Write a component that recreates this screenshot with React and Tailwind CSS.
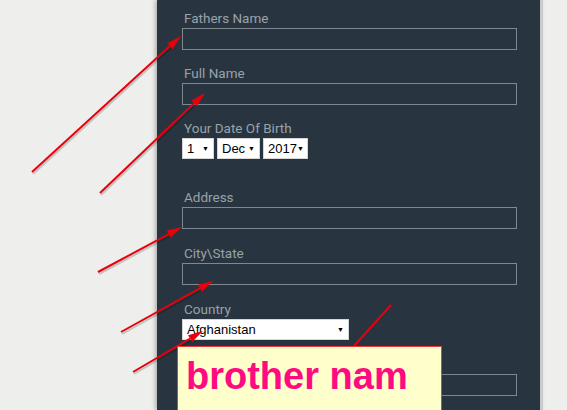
const labelCls = "block h-4 leading-4 text-[13.5px] text-[#98a2a8] mb-[2px] pl-[2px]";
const inputCls = "block w-[335px] h-[22px] border border-[#7d898f] bg-transparent";

function Field({ label, className = "" }) {
  return (
    <div className={className}>
      <label className={labelCls}>{label}</label>
      <div className={inputCls} />
    </div>
  );
}

function FakeSelect({ value, width }) {
  return (
    <div
      className={`flex items-center justify-between h-[21px] bg-white border border-[#d6d6d6] pl-[4px] pr-[4px] text-[13px] text-black ${width}`}
      style={{ fontFamily: '"Liberation Sans", Arial, sans-serif' }}
    >
      <span>{value}</span>
      <span className="text-[7px] leading-none">▼</span>
    </div>
  );
}

const arrows = [
  { x1: 32, y1: 172, x2: 181, y2: 36 },
  { x1: 100, y1: 193, x2: 205, y2: 93 },
  { x1: 98, y1: 272, x2: 182, y2: 227 },
  { x1: 121, y1: 332, x2: 213, y2: 281 },
  { x1: 133, y1: 372, x2: 203, y2: 331 },
];

function Arrow({ x1, y1, x2, y2 }) {
  const dx = x2 - x1;
  const dy = y2 - y1;
  const len = Math.hypot(dx, dy);
  const ux = dx / len;
  const uy = dy / len;
  const bx = x2 - ux * 15;
  const by = y2 - uy * 15;
  const px = -uy * 4;
  const py = ux * 4;
  const head = `${x2},${y2} ${bx + px},${by + py} ${bx - px},${by - py}`;
  return (
    <g>
      <line x1={x1 + 1} y1={y1 + 2} x2={bx + 1} y2={by + 2} stroke="rgba(0,0,0,0.18)" strokeWidth="2" />
      <line x1={x1} y1={y1} x2={bx} y2={by} stroke="#e8000b" strokeWidth="2" />
      <polygon points={head} fill="#e8000b" />
    </g>
  );
}

export default function App() {
  return (
    <div
      className="relative w-[567px] h-[410px] overflow-hidden bg-[#eeeeec]"
      style={{ fontFamily: "Roboto, 'Noto Sans', sans-serif" }}
    >
      <div className="ml-[157px] w-[386px] h-[410px] bg-[#283540] pl-[25px] pt-[10px] border-r-[3px] border-[#c9cbcb] shadow-[-2px_0_4px_rgba(0,0,0,0.25)]">
        <Field label="Fathers Name" />
        <Field label="Full Name" className="mt-[15px]" />

        <div className="mt-[15px]">
          <label className={labelCls}>Your Date Of Birth</label>
          <div className="flex gap-[3px]">
            <FakeSelect value="1" width="w-[32px]" />
            <FakeSelect value="Dec" width="w-[43px]" />
            <FakeSelect value="2017" width="w-[45px]" />
          </div>
        </div>

        <Field label="Address" className="mt-[30px]" />
        <Field label="City\State" className="mt-[16px]" />

        <div className="mt-[16px]">
          <label className={labelCls}>Country</label>
          <FakeSelect value="Afghanistan" width="w-[167px]" />
        </div>

        {/* label of this field is hidden under the note */}
        <Field label="" className="mt-[16px]" />
      </div>

      <svg className="absolute left-0 top-0" width="567" height="410">
        <line x1="391" y1="305" x2="354" y2="346" stroke="#e8000b" strokeWidth="2" />
        {arrows.map((a, i) => (
          <Arrow key={i} {...a} />
        ))}
      </svg>

      <div className="absolute left-[177px] top-[346px] w-[265px] h-[80px] bg-[#ffffcc] border border-[#f03a3a] pl-[8px] pt-[7px]">
        <span
          className="font-bold text-[38px] leading-[44px] text-[#ff0a80]"
          style={{ fontFamily: '"Liberation Sans", Arial, sans-serif' }}
        >
          brother nam
        </span>
      </div>
    </div>
  );
}
